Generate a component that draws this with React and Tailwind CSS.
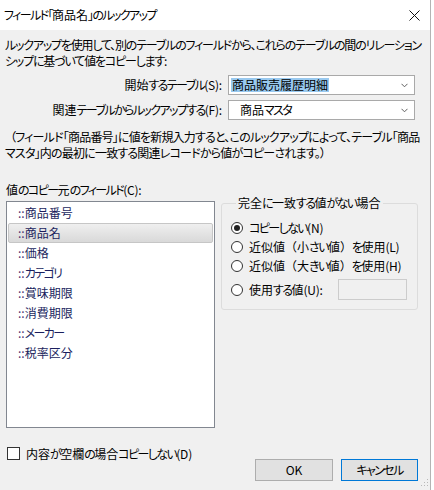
import React from 'react';

const fields = ['商品番号', '商品名', '価格', 'カテゴリ', '賞味期限', '消費期限', 'メーカー', '税率区分'];

const radios = [
  { label: 'コピーしない(N)', checked: true },
  { label: '近似値（小さい値）を使用(L)' },
  { label: '近似値（大きい値）を使用(H)' },
];

// Windows UI fonts have narrow kana; Noto's are wider, so tighten the kana runs only (single-line labels)
const T = ({ children }) => {
  const parts = String(children).split(/([\u4e00-\u9fff々]+|[\x20-\x7e]+|[（）]+)/).filter(Boolean);
  return parts.map((p, i) => {
    if (/^[\u4e00-\u9fff々]+$/.test(p)) return <span key={i}>{p}</span>;
    if (/^[\x20-\x7e]+$/.test(p)) return <span key={i} className="tracking-[-0.2px]">{p}</span>;
    if (/^[（）]+$/.test(p)) return <span key={i} className="[font-feature-settings:normal]">{p}</span>;
    return <span key={i} className="tracking-[-1.6px]">{p}</span>;
  });
};

const Chevron = () => (
  <svg width="7" height="5" viewBox="0 0 7 5" className="shrink-0">
    <path d="M0.5 0.8 L3.5 3.8 L6.5 0.8" fill="none" stroke="#606060" strokeWidth="1" />
  </svg>
);

const Radio = ({ checked }) => (
  <span className="w-[12px] h-[12px] rounded-full border border-[#333] bg-white flex items-center justify-center shrink-0">
    {checked && <span className="w-[6px] h-[6px] rounded-full bg-[#222]" />}
  </span>
);

const App = () => {
  return (
    <div className="w-[434px] h-[490px] bg-white relative overflow-hidden font-['Noto_Sans_CJK_JP',sans-serif] [font-feature-settings:'palt'] text-[12px] text-black">
      <div className="w-[431px] h-full border-r border-[#b4b4b4] flex flex-col">
        {/* Title bar */}
        <div className="h-[30px] bg-white flex items-center justify-between shrink-0">
          <span className="pl-[4px] leading-[16px]"><T>フィールド「商品名」のルックアップ</T></span>
          <svg width="11" height="11" viewBox="0 0 11 11" className="mr-[10px]">
            <path d="M0.5 0.5 L10.5 10.5 M10.5 0.5 L0.5 10.5" stroke="#111" strokeWidth="1" />
          </svg>
        </div>

        {/* Body */}
        <div className="flex-1 bg-[#f0f0f0] flex flex-col relative">
          <p className="pt-[7px] px-[5px] leading-[16px] tracking-[-1.2px]">
            ルックアップを使用して、別のテーブルのフィールドから、これらのテーブルの間のリレーションシップに基づいて値をコピーします:
          </p>

          <div className="mt-[6px] h-[20px] flex items-center">
            <span className="w-[222px] text-right leading-[16px]"><T>開始するテーブル(S):</T></span>
            <div className="ml-[6px] w-[187px] h-[20px] bg-white border border-[#a9a9a9] flex items-center justify-between pl-[2px] pr-[6px]">
              <span className="bg-[#99c9ef] leading-[14px] px-[1px]">商品販売履歴明細</span>
              <Chevron />
            </div>
          </div>

          <div className="mt-[5px] h-[20px] flex items-center">
            <span className="w-[222px] text-right leading-[16px]"><T>関連テーブルからルックアップする(F):</T></span>
            <div className="ml-[6px] w-[187px] h-[20px] bg-white border border-[#a9a9a9] flex items-center justify-between pl-[11px] pr-[6px]">
              <span className="leading-[14px]"><T>商品マスタ</T></span>
              <Chevron />
            </div>
          </div>

          <p className="mt-[9px] w-[426px] px-[5px] indent-[5px] leading-[16px] tracking-[-0.8px]">
            （フィールド「商品番号」に値を新規入力すると、このルックアップによって、テーブル「商品マスタ」内の最初に一致する関連レコードから値がコピーされます。）
          </p>

          <div className="mt-[21px] flex items-start">
            {/* Source fields */}
            <div className="ml-[6px] flex flex-col">
              <span className="leading-[16px]"><T>値のコピー元のフィールド(C):</T></span>
              <div className="mt-[3px] w-[209px] h-[227px] bg-white border border-[#828790] pt-[1px] px-[1px] flex flex-col">
                {fields.map((f, i) => (
                  <div
                    key={f}
                    className={
                      i === 1
                        ? 'h-[20px] flex items-center pl-[9px] rounded-[2px] border border-[#c6c6c6] bg-gradient-to-b from-[#efefef] to-[#d9d9d9] text-[#1b1f5e]'
                        : 'h-[20px] flex items-center pl-[10px] text-[#1b1f5e]'
                    }
                  >
                    <span className="text-[#4a3070]">::</span>
                    <T>{f}</T>
                  </div>
                ))}
              </div>
            </div>

            {/* No exact match group */}
            <fieldset className="ml-[6px] mt-[13px] w-[197px] border border-[#dcdcdc] rounded-[3px] pl-[9px] pr-[10px] pb-[9px]">
              <legend className="ml-[5px] px-[2px] leading-[16px]"><T>完全に一致する値がない場合</T></legend>
              <div className="mt-[7px] flex flex-col">
                {radios.map((r) => (
                  <div key={r.label} className="h-[19px] flex items-center gap-[6px]">
                    <Radio checked={r.checked} />
                    <span className="leading-[16px]"><T>{r.label}</T></span>
                  </div>
                ))}
                <div className="mt-[4px] h-[21px] flex items-center gap-[6px]">
                  <Radio />
                  <span className="leading-[16px]"><T>使用する値(U):</T></span>
                  <div className="ml-auto w-[69px] h-[21px] border border-[#cccccc] bg-[#f0f0f0]" />
                </div>
              </div>
            </fieldset>
          </div>

          {/* Bottom row */}
          <div className="flex items-start justify-between">
            <div className="ml-[7px] mt-[19px] flex items-center gap-[6px] h-[13px]">
              <span className="w-[13px] h-[13px] border border-[#333] bg-white shrink-0" />
              <span className="leading-[16px]"><T>内容が空欄の場合コピーしない(D)</T></span>
            </div>
            <div className="mt-[31px] mr-[12px] flex gap-[8px]">
              <button className="w-[78px] h-[22px] bg-[#e1e1e1] border border-[#adadad] leading-[16px]">OK</button>
              <button className="w-[77px] h-[22px] bg-[#e1e1e1] border border-[#0078d7] leading-[16px]"><T>キャンセル</T></button>
            </div>
          </div>

          {/* Resize grip */}
          <svg width="10" height="10" viewBox="0 0 10 10" className="absolute right-[1px] bottom-[1px]">
            <rect x="8" y="0" width="1" height="1" fill="#b8b8b8" />
            <rect x="5" y="3" width="1" height="1" fill="#b8b8b8" />
            <rect x="8" y="3" width="1" height="1" fill="#b8b8b8" />
            <rect x="2" y="6" width="1" height="1" fill="#b8b8b8" />
            <rect x="5" y="6" width="1" height="1" fill="#b8b8b8" />
            <rect x="8" y="6" width="1" height="1" fill="#b8b8b8" />
          </svg>
        </div>
      </div>
    </div>
  );
};

export default App;
